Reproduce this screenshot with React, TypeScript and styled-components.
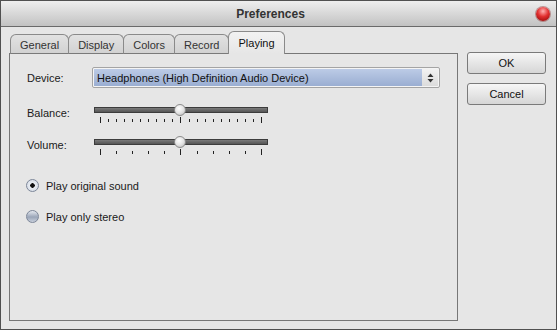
import styled, { createGlobalStyle } from "styled-components";

const GlobalStyle = createGlobalStyle`
  body {
    margin: 0;
    background: #e6e6e6;
    font-family: "Liberation Sans", Arial, sans-serif;
  }
`;

const tabs = ["General", "Display", "Colors", "Record", "Playing"];

function Slider({ value, ticks }: { value: number; ticks: number }) {
  return (
    <St.SliderBox>
      <St.TrackArea>
        <St.Track />
        <St.Thumb style={{ left: `${value * 100}%` }} />
      </St.TrackArea>
      <St.Ticks>
        {Array.from({ length: ticks }).map((_, i) => (
          <St.Tick key={i} $long={i === 0 || i === ticks - 1 || i === (ticks - 1) / 2} />
        ))}
      </St.Ticks>
    </St.SliderBox>
  );
}

export default function App() {
  return (
    <>
      <GlobalStyle />
      <St.Window>
        <St.TitleBar>
          <span />
          <St.Title>Preferences</St.Title>
          <St.Close />
        </St.TitleBar>
        <St.Body>
          <St.Main>
            <St.TabRow>
              {tabs.map((t) => (
                <St.Tab key={t} $active={t === "Playing"}>
                  {t}
                </St.Tab>
              ))}
            </St.TabRow>
            <St.Panel>
              <St.DeviceRow>
                <St.Label>Device:</St.Label>
                <St.Select>
                  <St.SelectValue>Headphones (High Definition Audio Device)</St.SelectValue>
                  <St.SelectArrow>
                    <svg width="7" height="10" viewBox="0 0 7 10">
                      <path d="M3.5 0.5 L6.5 4 L0.5 4 Z M3.5 9.5 L6.5 6 L0.5 6 Z" fill="#333" />
                    </svg>
                  </St.SelectArrow>
                </St.Select>
              </St.DeviceRow>
              <St.SliderRow $gap={16}>
                <St.Label>Balance:</St.Label>
                <Slider value={0.5} ticks={21} />
              </St.SliderRow>
              <St.SliderRow $gap={13}>
                <St.Label>Volume:</St.Label>
                <Slider value={0.5} ticks={11} />
              </St.SliderRow>
              <St.RadioRow $gap={24}>
                <St.Radio $checked />
                <span>Play original sound</span>
              </St.RadioRow>
              <St.RadioRow $gap={18}>
                <St.Radio />
                <span>Play only stereo</span>
              </St.RadioRow>
            </St.Panel>
          </St.Main>
          <St.Buttons>
            <St.Button>OK</St.Button>
            <St.Button>Cancel</St.Button>
          </St.Buttons>
        </St.Body>
      </St.Window>
    </>
  );
}

const St = {
  Window: styled.div`
    width: 557px;
    height: 330px;
    box-sizing: border-box;
    border: 1px solid #505050;
    background: #e6e6e6;
    display: flex;
    flex-direction: column;
    color: #1a1a1a;
    font-size: 11px;
  `,
  TitleBar: styled.div`
    height: 25px;
    border-bottom: 1px solid #6a6a6a;
    background: linear-gradient(#eeeeee, #c2c2c2);
    display: grid;
    grid-template-columns: 1fr auto 1fr;
    align-items: center;
    padding: 0 6px 0 0;
  `,
  Title: styled.div`
    font-weight: bold;
    font-size: 12px;
    color: #333;
    margin-right: 10px;
  `,
  Close: styled.div`
    justify-self: end;
    width: 14px;
    height: 14px;
    border-radius: 50%;
    background: radial-gradient(circle at 50% 30%, #ffb0b0 0%, #e23030 45%, #8a0000 100%);
    box-shadow: 0 0 0 1px rgba(120, 0, 0, 0.35);
  `,
  Body: styled.div`
    flex: 1;
    display: flex;
    padding: 5px 10px 8px 8px;
    gap: 9px;
  `,
  Main: styled.div`
    width: 449px;
    display: flex;
    flex-direction: column;
  `,
  TabRow: styled.div`
    display: flex;
    align-items: flex-end;
    height: 22px;
    padding-left: 1px;
    position: relative;
    z-index: 1;
    margin-bottom: -1px;
  `,
  Tab: styled.div<{ $active?: boolean }>`
    box-sizing: border-box;
    height: ${({ $active }) => ($active ? "23px" : "20px")};
    padding: 0 9px;
    border: 1px solid #8a8a8a;
    border-bottom: ${({ $active }) => ($active ? "none" : "1px solid #7a7a7a")};
    border-radius: 6px 6px 0 0;
    margin-right: -1px;
    background: ${({ $active }) =>
      $active ? "linear-gradient(#f2f2f2, #e6e6e6)" : "linear-gradient(#e2e2e2, #d2d2d2)"};
    color: ${({ $active }) => ($active ? "#111" : "#333")};
    display: flex;
    align-items: center;
    padding-top: ${({ $active }) => ($active ? "0" : "1px")};
    padding-bottom: ${({ $active }) => ($active ? "1px" : "0")};
  `,
  Panel: styled.div`
    flex: 1;
    border: 1px solid #777;
    padding: 13px 0 0 17px;
    display: flex;
    flex-direction: column;
  `,
  Label: styled.div`
    width: 65px;
    flex-shrink: 0;
  `,
  DeviceRow: styled.div`
    display: flex;
    align-items: center;
    height: 21px;
  `,
  Select: styled.div`
    box-sizing: border-box;
    width: 348px;
    height: 21px;
    border: 1px solid #a4a4a4;
    border-radius: 2px;
    background: #f4f4f4;
    display: flex;
    padding: 1px;
  `,
  SelectValue: styled.div`
    flex: 1;
    background: linear-gradient(#bccbe6, #9aaed2);
    display: flex;
    align-items: center;
    padding-left: 3px;
    color: #111;
  `,
  SelectArrow: styled.div`
    width: 16px;
    display: flex;
    align-items: center;
    justify-content: center;
    background: linear-gradient(#f2f2f2, #dcdcdc);
  `,
  SliderRow: styled.div<{ $gap: number }>`
    display: flex;
    margin-top: ${({ $gap }) => $gap}px;
    & > div:first-child {
      padding-top: 3px;
    }
  `,
  SliderBox: styled.div`
    width: 174px;
    margin-left: 2px;
  `,
  TrackArea: styled.div`
    position: relative;
    height: 12px;
    display: flex;
    align-items: center;
  `,
  Track: styled.div`
    box-sizing: border-box;
    width: 100%;
    height: 6px;
    border: 1px solid #3c3c3c;
    background: linear-gradient(#7a7a7a, #555);
  `,
  Thumb: styled.div`
    position: absolute;
    top: 0;
    width: 12px;
    height: 12px;
    margin-left: -7px;
    box-sizing: border-box;
    border-radius: 50%;
    border: 1px solid #8c8c8c;
    background: radial-gradient(circle at 40% 35%, #ffffff 0%, #e4e4e4 50%, #b4b4b4 100%);
  `,
  Ticks: styled.div`
    display: flex;
    justify-content: space-between;
    align-items: center;
    height: 6px;
    margin-top: 1px;
    padding: 0 6px;
  `,
  Tick: styled.span<{ $long?: boolean }>`
    width: 1px;
    height: ${({ $long }) => ($long ? "6px" : "3px")};
    background: #222;
  `,
  RadioRow: styled.div<{ $gap: number }>`
    display: flex;
    align-items: center;
    gap: 7px;
    height: 13px;
    margin-top: ${({ $gap }) => $gap}px;
    margin-left: -1px;
  `,
  Radio: styled.span<{ $checked?: boolean }>`
    box-sizing: border-box;
    width: 13px;
    height: 13px;
    border-radius: 50%;
    border: 1px solid #7d8799;
    background: ${({ $checked }) =>
      $checked
        ? "radial-gradient(circle, #111 0 2px, #e8ecf2 2.5px, #cfd6e2 100%)"
        : "linear-gradient(#e4e8ef, #9aa5b8 55%, #c9d0dc)"};
  `,
  Buttons: styled.div`
    display: flex;
    flex-direction: column;
    gap: 9px;
    padding-top: 20px;
  `,
  Button: styled.button`
    width: 79px;
    height: 22px;
    border: 1px solid #7a7a7a;
    border-radius: 3px;
    background: linear-gradient(#f6f6f6, #d6d6d6);
    font-family: "Liberation Sans", Arial, sans-serif;
    font-size: 11px;
    color: #111;
    padding: 0;
  `,
};
